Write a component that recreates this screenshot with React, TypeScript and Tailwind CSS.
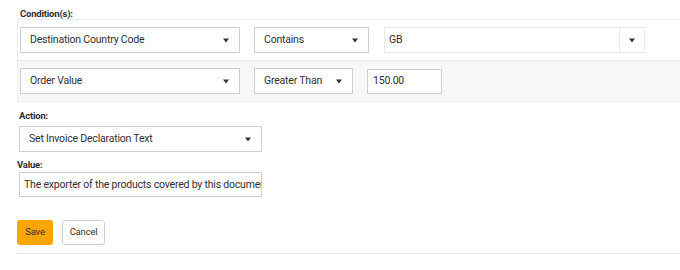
import React from "react";

const Arrow = () => (
  <svg width="6" height="5" viewBox="0 0 6 5" className="shrink-0">
    <path d="M0 0.5 H6 L3 4.5 Z" fill="#333" />
  </svg>
);

const Select = ({ label, w, h = "h-[26px]" }: { label: string; w: string; h?: string }) => (
  <div className={`${w} ${h} flex items-center justify-between border border-[#cfcfcf] bg-white pl-[9px] pr-[10px]`}>
    <span className="whitespace-nowrap">{label}</span>
    <Arrow />
  </div>
);

export default function App() {
  return (
    <div
      className="w-[680px] h-[270px] bg-white text-[#2f3033] text-[10.5px] tracking-[-0.2px] overflow-hidden pl-[17px]"
      style={{ fontFamily: "Roboto, 'Liberation Sans', sans-serif" }}
    >
      <div className="h-[19px] pt-[9px] pl-[3px] text-[9.5px] font-bold leading-[10px]">Condition(s):</div>
      <div className="border border-r-0 border-[#ececec]">
        <div className="flex items-center pl-[2px] py-[7px]">
          <Select label="Destination Country Code" w="w-[220px]" />
          <div className="ml-[14px]">
            <Select label="Contains" w="w-[115px]" />
          </div>
          <div className="ml-[15px] w-[261px] h-[26px] flex border border-[#e8e8e8] bg-white">
            <div className="flex-1 flex items-center pl-[4px]">GB</div>
            <div className="w-[25px] flex items-center justify-center border-l border-[#e8e8e8]">
              <Arrow />
            </div>
          </div>
        </div>
        <div className="flex items-center gap-[14px] pl-[2px] py-[7px] bg-[#f7f7f7] border-t border-[#ececec]">
          <Select label="Order Value" w="w-[220px]" />
          <Select label="Greater Than" w="w-[99px]" />
          <div className="w-[75px] h-[25px] flex items-center border border-[#cfcfcf] bg-white pl-[5px]">150.00</div>
        </div>
      </div>
      <div className="mt-[8px] pl-[2px] text-[9.5px] font-bold leading-[12px]">Action:</div>
      <div className="mt-[4px] pl-[2px]">
        <Select label="Set Invoice Declaration Text" w="w-[243px]" />
      </div>
      <div className="mt-[7px] text-[9.5px] font-bold leading-[12px]">Value:</div>
      <div className="mt-[1px] pl-[2px]">
        <div className="w-[243px] h-[25px] flex items-center border border-[#cfcfcf] bg-white pl-[4px] overflow-hidden whitespace-nowrap">
          The exporter of the products covered by this document
        </div>
      </div>
      <div className="mt-[23px] flex gap-[9px]">
        <button className="w-[36px] h-[25px] rounded-[3px] bg-[#ffa500] text-[9.5px] text-[#333]">Save</button>
        <button className="w-[43px] h-[25px] rounded-[3px] border border-[#cfcfcf] bg-white text-[9.5px] text-[#333]">Cancel</button>
      </div>
      <div className="mt-[8px] border-t border-[#e8e8e8]" />
    </div>
  );
}
